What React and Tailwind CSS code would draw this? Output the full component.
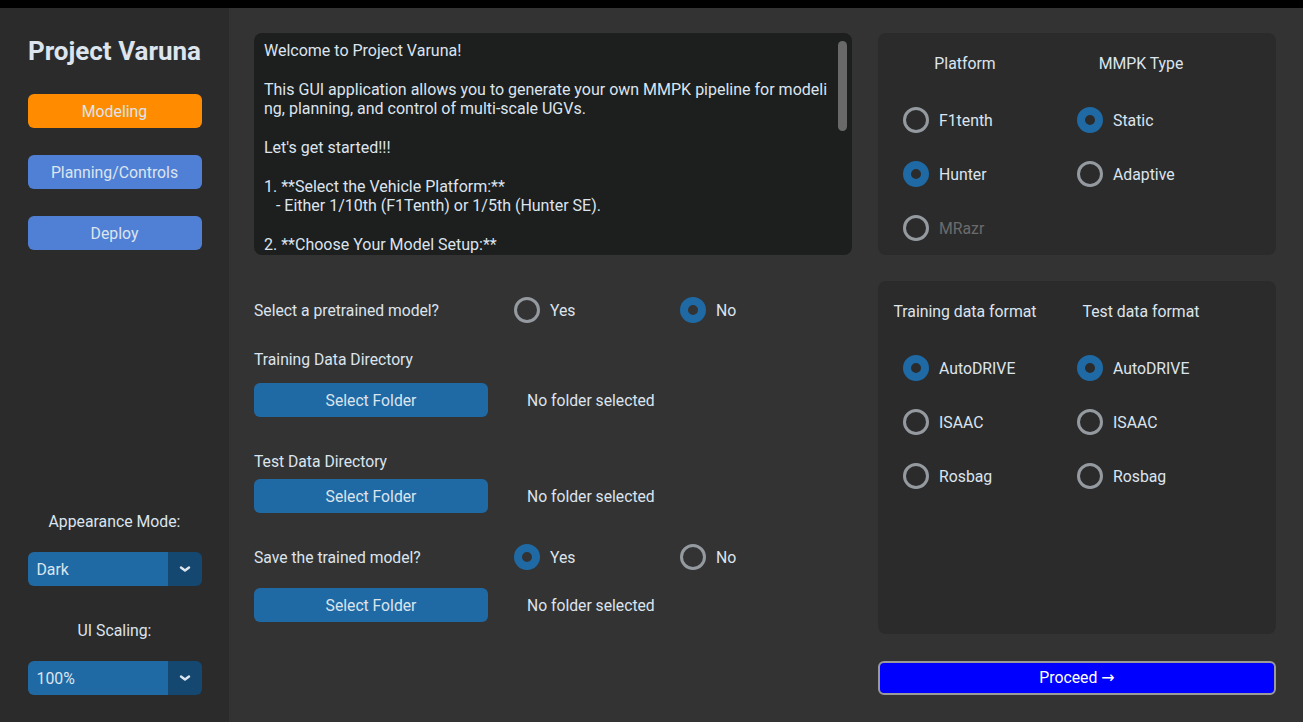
import React from "react";

const TXT = "text-[#dce4ee]";

function Radio({ checked, label, disabled }) {
  return (
    <div className="flex items-center h-[26px] gap-[10px]">
      {checked ? (
        <div className="w-[26px] h-[26px] rounded-full border-[8px] border-[#1f6aa5] box-border shrink-0" />
      ) : (
        <div className="w-[26px] h-[26px] rounded-full border-[3px] border-[#949a9f] box-border shrink-0" />
      )}
      <span className={`text-[15.8px] leading-[20px] pt-[2px] ${disabled ? "text-[#6b6b6b]" : TXT}`}>{label}</span>
    </div>
  );
}

function Chevron() {
  return (
    <svg width="12" height="8" viewBox="0 0 12 8" fill="none">
      <path d="M2 2.5 L6 5.5 L10 2.5" stroke="#dce4ee" strokeWidth="2.4" strokeLinecap="round" strokeLinejoin="round" />
    </svg>
  );
}

function Dropdown({ value }) {
  return (
    <div className="flex w-[174px] h-[34px] rounded-[6px] overflow-hidden">
      <div className={`flex-1 bg-[#1f6aa5] flex items-center pl-[9px] pt-[2px] text-[15.8px] ${TXT}`}>{value}</div>
      <div className="w-[34px] bg-[#144870] flex items-center justify-center">
        <Chevron />
      </div>
    </div>
  );
}

function SideButton({ label, orange }) {
  return (
    <div
      className={`w-[174px] h-[34px] rounded-[6px] flex items-center justify-center pt-[1px] text-[15.8px] ${TXT} ${
        orange ? "bg-[#ff8c00]" : "bg-[#5080d6]"
      }`}
    >
      {label}
    </div>
  );
}

function FolderButton() {
  return (
    <div className={`w-[234px] h-[34px] rounded-[6px] bg-[#1f6aa5] flex items-center justify-center pt-[1px] text-[15.7px] ${TXT}`}>
      Select Folder
    </div>
  );
}

function FolderRow({ className = "" }) {
  return (
    <div className={`flex items-center ${className}`}>
      <FolderButton />
      <span className={`ml-[39px] pt-[2px] text-[15.7px] ${TXT}`}>No folder selected</span>
    </div>
  );
}

function YesNoRow({ label, yes, className = "" }) {
  return (
    <div className={`flex items-center h-[26px] ${className}`}>
      <div className={`w-[260px] pt-[2px] text-[15.7px] ${TXT}`}>{label}</div>
      <div className="w-[166px]">
        <Radio checked={yes} label="Yes" />
      </div>
      <Radio checked={!yes} label="No" />
    </div>
  );
}

function OptionPanel({ h, left, right }) {
  return (
    <div className={`bg-[#2b2b2b] rounded-[8px] ${h} flex`}>
      {[left, right].map((col, i) => (
        <div key={i} className={i === 0 ? "w-[174px]" : "w-[178px]"}>
          <div className={`mt-[21px] h-[20px] leading-[20px] text-center text-[15.8px] whitespace-nowrap ${TXT}`}>{col.title}</div>
          <div className="mt-[33px] pl-[25px] flex flex-col gap-[28px]">
            {col.items.map((it) => (
              <Radio key={it.label} {...it} />
            ))}
          </div>
        </div>
      ))}
    </div>
  );
}

const lines = [
  "Welcome to Project Varuna!",
  "",
  "This GUI application allows you to generate your own MMPK pipeline for modeli",
  "ng, planning, and control of multi-scale UGVs.",
  "",
  "Let's get started!!!",
  "",
  "1. **Select the Vehicle Platform:**",
  "   - Either 1/10th (F1Tenth) or 1/5th (Hunter SE).",
  "",
  "2. **Choose Your Model Setup:**",
  "   - Pick whether to use a pretrained model.",
];

export default function App() {
  return (
    <div className="w-[1303px] h-[722px] flex flex-col bg-[#333333] overflow-hidden font-['Roboto','Liberation_Sans',sans-serif]">
      <div className="h-[8px] bg-black shrink-0" />
      <div className="flex flex-1 min-h-0">
        {/* Sidebar */}
        <div className="w-[229px] bg-[#2b2b2b] flex flex-col items-center shrink-0">
          <div className={`mt-[26px] h-[34px] leading-[34px] text-[26px] font-bold whitespace-nowrap ${TXT}`}>Project Varuna</div>
          <div className="mt-[26px] flex flex-col gap-[27px]">
            <SideButton label="Modeling" orange />
            <SideButton label="Planning/Controls" />
            <SideButton label="Deploy" />
          </div>
          <div className={`mt-[262px] h-[20px] leading-[20px] text-[15.8px] ${TXT}`}>Appearance Mode:</div>
          <div className="mt-[20px]">
            <Dropdown value="Dark" />
          </div>
          <div className={`mt-[35px] h-[20px] leading-[20px] text-[15.8px] ${TXT}`}>UI Scaling:</div>
          <div className="mt-[20px]">
            <Dropdown value="100%" />
          </div>
        </div>

        {/* Main */}
        <div className="flex-1 pt-[25px] pl-[25px] flex gap-[26px]">
          {/* Left column */}
          <div className="w-[598px] flex flex-col">
            <div className="h-[222px] bg-[#1d1e1e] rounded-[8px] flex overflow-hidden">
              <div className={`flex-1 pl-[10px] pt-[8px] text-[16px] ${TXT} overflow-hidden`}>
                {lines.map((l, i) => (
                  <div key={i} className="h-[19.4px] leading-[19.4px] whitespace-pre">
                    {l}
                  </div>
                ))}
              </div>
              <div className="w-[10px] mr-[4px] pt-[8px] shrink-0">
                <div className="h-[90px] w-[9px] rounded-full bg-[#696969]" />
              </div>
            </div>

            <YesNoRow label="Select a pretrained model?" yes={false} className="mt-[42px]" />
            <div className={`mt-[27px] h-[20px] leading-[20px] text-[15.7px] ${TXT}`}>Training Data Directory</div>
            <FolderRow className="mt-[13px]" />
            <div className={`mt-[35px] h-[20px] leading-[20px] text-[15.7px] ${TXT}`}>Test Data Directory</div>
            <FolderRow className="mt-[7px]" />
            <YesNoRow label="Save the trained model?" yes={true} className="mt-[31px]" />
            <FolderRow className="mt-[18px]" />
          </div>

          {/* Right column */}
          <div className="w-[398px] flex flex-col">
            <OptionPanel
              h="h-[222px]"
              left={{
                title: "Platform",
                items: [
                  { label: "F1tenth", checked: false },
                  { label: "Hunter", checked: true },
                  { label: "MRazr", checked: false, disabled: true },
                ],
              }}
              right={{
                title: "MMPK Type",
                items: [
                  { label: "Static", checked: true },
                  { label: "Adaptive", checked: false },
                ],
              }}
            />
            <div className="mt-[26px]">
              <OptionPanel
                h="h-[353px]"
                left={{
                  title: "Training data format",
                  items: [
                    { label: "AutoDRIVE", checked: true },
                    { label: "ISAAC", checked: false },
                    { label: "Rosbag", checked: false },
                  ],
                }}
                right={{
                  title: "Test data format",
                  items: [
                    { label: "AutoDRIVE", checked: true },
                    { label: "ISAAC", checked: false },
                    { label: "Rosbag", checked: false },
                  ],
                }}
              />
            </div>
            <div className="mt-[27px] h-[34px] rounded-[6px] bg-[#0000ff] border-2 border-[#9a9a9a] flex items-center justify-center text-[15.8px] text-white">
              Proceed <span className="ml-[4px] font-['DejaVu_Sans',sans-serif] text-[16px]">→</span>
            </div>
          </div>
        </div>
      </div>
    </div>
  );
}
